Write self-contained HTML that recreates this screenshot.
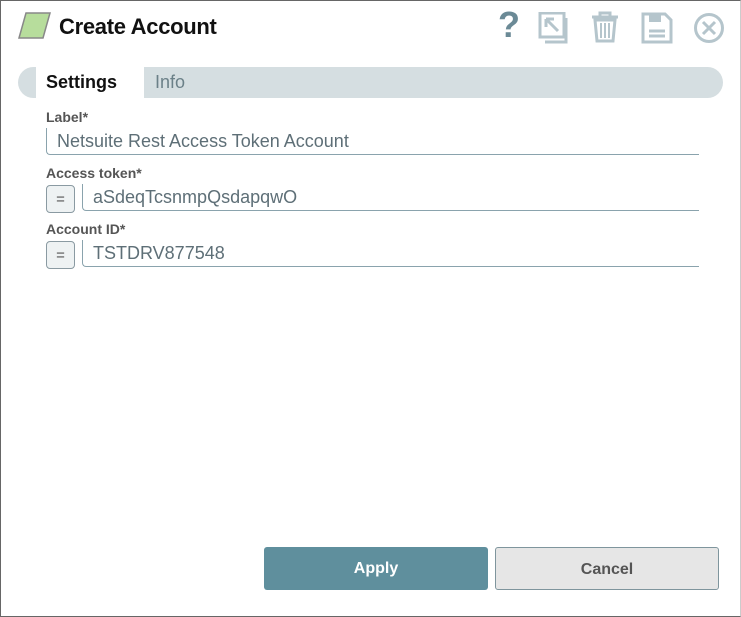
<!DOCTYPE html>
<html><head><style>
body{margin:0;width:741px;height:617px;background:#fff;font-family:"Liberation Sans",sans-serif;position:relative;overflow:hidden}
.frame{position:absolute;left:0;top:0;width:739px;height:615px;border:1px solid #666;border-right-color:#ccc}
.abs{position:absolute}
.lbl{position:absolute;left:46px;font-size:14px;font-weight:bold;color:#555}
.inp{position:absolute;height:27px;border-left:1px solid #8aa3ad;border-bottom:1px solid #8aa3ad;border-bottom-left-radius:4px;font-size:18px;color:#5e6f77;line-height:26px;padding-left:10px;box-sizing:border-box}
.eq{position:absolute;left:46px;width:29px;height:28px;box-sizing:border-box;border:1px solid #8a9aa2;border-radius:4px;background:#eef2f3;color:#555;text-align:center;line-height:27px;font-size:15px}
.btn{position:absolute;top:547px;height:43px;box-sizing:border-box;border-radius:3px;text-align:center;line-height:44px;font-size:16px;font-weight:bold}
</style></head><body>
<div class="frame"></div>
<svg class="abs" style="left:18px;top:12px" width="34" height="28"><polygon points="8,1 32,1 25,26 1,26" fill="#b7dd9c" stroke="#888" stroke-width="1.5"/></svg>
<div class="abs" style="left:59px;top:14px;font-size:22px;font-weight:bold;color:#111;letter-spacing:-0.3px">Create Account</div>
<div class="abs" style="left:498px;top:4px;font-size:36px;font-weight:bold;color:#6b8a96">?</div>
<svg class="abs" style="left:538px;top:12px" width="34" height="32"><rect x="2" y="1" width="24" height="24" fill="none" stroke="#b5c5cc" stroke-width="3"/><path d="M28 6v24H7" fill="none" stroke="#b5c5cc" stroke-width="3"/><path d="M8 7l12 12M8 7v8M8 7h8" fill="none" stroke="#b5c5cc" stroke-width="3"/></svg>
<svg class="abs" style="left:590px;top:11px" width="30" height="32"><path d="M2 6h26M10 6V2h10v4M5 9l2 21h16l2-21z" fill="none" stroke="#b5c5cc" stroke-width="3"/><path d="M11 12v15M15 12v15M19 12v15" stroke="#b5c5cc" stroke-width="2"/></svg>
<svg class="abs" style="left:641px;top:12px" width="32" height="32"><path d="M2 2h22l6 6v22H2z" fill="none" stroke="#b5c5cc" stroke-width="3"/><rect x="8" y="2" width="12" height="8" fill="#b5c5cc"/><path d="M8 19h16M8 24h16" stroke="#b5c5cc" stroke-width="3"/></svg>
<svg class="abs" style="left:693px;top:12px" width="32" height="32"><circle cx="16" cy="16" r="13.5" fill="none" stroke="#b5c5cc" stroke-width="3"/><path d="M10 10l12 12M22 10L10 22" stroke="#b5c5cc" stroke-width="3"/></svg>
<div class="abs" style="left:18px;top:67px;width:705px;height:31px;background:#d5dee1;border-radius:16px"></div>
<div class="abs" style="left:36px;top:67px;width:108px;height:31px;background:#fff"></div>
<div class="abs" style="left:46px;top:72px;font-size:18px;font-weight:bold;color:#111">Settings</div>
<div class="abs" style="left:155px;top:72px;font-size:18px;color:#6b8088">Info</div>
<div class="lbl" style="top:109px">Label*</div>
<div class="inp" style="left:46px;top:128px;width:653px">Netsuite Rest Access Token Account</div>
<div class="lbl" style="top:165px">Access token*</div>
<div class="eq" style="top:185px">=</div>
<div class="inp" style="left:82px;top:184px;width:617px">aSdeqTcsnmpQsdapqwO</div>
<div class="lbl" style="top:221px">Account ID*</div>
<div class="eq" style="top:241px">=</div>
<div class="inp" style="left:82px;top:240px;width:617px">TSTDRV877548</div>
<div class="btn" style="left:264px;width:224px;background:#5f8f9d;color:#fff">Apply</div>
<div class="btn" style="left:495px;width:224px;background:#e6e6e6;border:1px solid #7f959d;color:#555">Cancel</div>
</body></html>
